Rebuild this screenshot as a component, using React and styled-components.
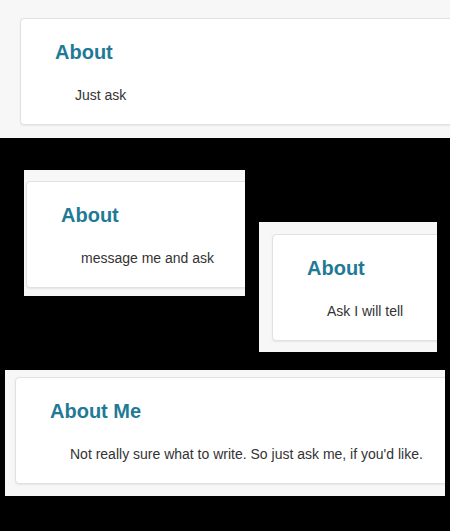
import React from "react";
import styled, { createGlobalStyle } from "styled-components";

const Global = createGlobalStyle`
  html, body {
    margin: 0;
    padding: 0;
    background: #000;
  }
  body {
    font-family: "Liberation Sans", Arial, Helvetica, sans-serif;
    width: 450px;
    height: 531px;
    overflow: hidden;
  }
`;

const Collage = styled.main`
  display: flex;
  flex-direction: column;
  align-items: flex-start;
  width: 450px;
  min-height: 531px;
  background: #000;
`;

const Row = styled.div`
  display: flex;
  align-items: flex-start;
  gap: ${(p) => p.$gap || 0}px;
  margin-top: ${(p) => p.$top || 0}px;
  margin-left: ${(p) => p.$left || 0}px;
`;

const Shot = styled.section`
  box-sizing: border-box;
  width: ${(p) => p.$w}px;
  height: ${(p) => p.$h}px;
  margin-top: ${(p) => p.$mt || 0}px;
  padding: ${(p) => p.$py}px 0 0 ${(p) => p.$px}px;
  background: #f7f7f7;
  overflow: hidden;
  flex-shrink: 0;
`;

const Card = styled.article`
  box-sizing: border-box;
  width: 560px;
  background: #fff;
  border: 1px solid #e1e1e1;
  border-radius: 4px;
  box-shadow: 0 1px 2px rgba(0, 0, 0, 0.07);
  padding: 21px 0 19px 34px;
`;

const Heading = styled.h2`
  margin: 0 0 21px;
  font-size: 20px;
  line-height: 24px;
  font-weight: bold;
  color: #1f7a95;
`;

const Body = styled.p`
  margin: 0 0 0 20px;
  font-size: 14px;
  line-height: 20px;
  color: #333;
`;

function AboutCard({ title, text }) {
  return (
    <Card>
      <Heading>{title}</Heading>
      <Body>{text}</Body>
    </Card>
  );
}

export default function App() {
  return (
    <>
      <Global />
      <Collage>
        <Shot $w={450} $h={138} $py={18} $px={20}>
          <AboutCard title="About" text="Just ask" />
        </Shot>
        <Row $top={32} $left={24} $gap={14}>
          <Shot $w={221} $h={126} $py={11} $px={2}>
            <AboutCard title="About" text="message me and ask" />
          </Shot>
          <Shot $w={178} $h={130} $py={12} $px={13} $mt={52}>
            <AboutCard title="About" text="Ask I will tell" />
          </Shot>
        </Row>
        <Row $top={18} $left={5}>
          <Shot $w={440} $h={126} $py={7} $px={10}>
            <AboutCard
              title="About Me"
              text="Not really sure what to write. So just ask me, if you'd like."
            />
          </Shot>
        </Row>
      </Collage>
    </>
  );
}
